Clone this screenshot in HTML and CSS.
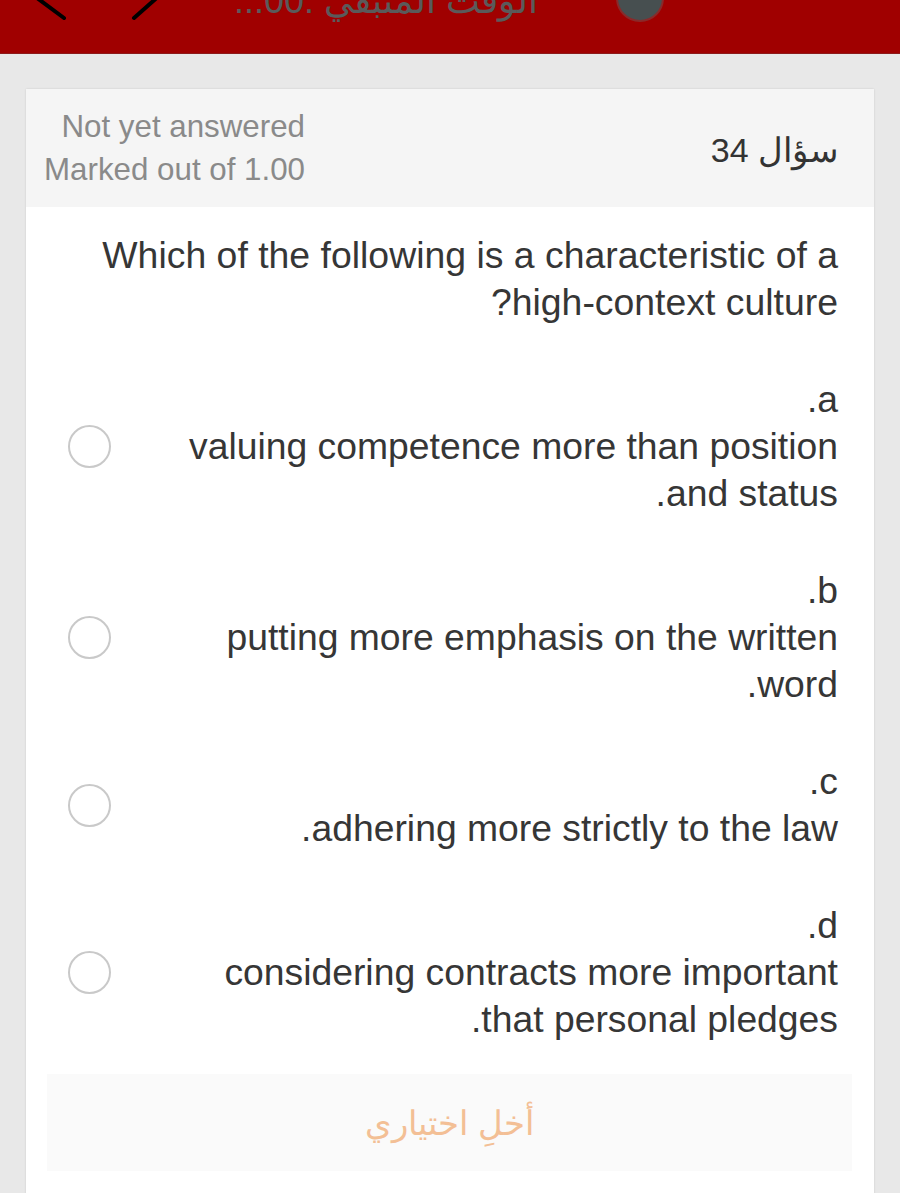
FILE: index.html
```html
<!DOCTYPE html>
<html lang="ar">
<head>
<meta charset="utf-8">
<title>Quiz</title>
<link rel="stylesheet" href="styles.css">
</head>
<body>
<header class="topbar">
  <div class="topbar-row">
    <svg class="chev chev-prev" width="38" height="54" viewBox="0 0 38 54"><polyline points="34,4 3,27 34,50" fill="none" stroke="#000" stroke-width="4" stroke-linecap="round" stroke-linejoin="round"/></svg>
    <svg class="chev chev-next" width="34" height="54" viewBox="0 0 34 54"><polyline points="4,4 30,27 4,50" fill="none" stroke="#000" stroke-width="4" stroke-linecap="round" stroke-linejoin="round"/></svg>
    <div class="timer" dir="rtl">الوقت المتبقي :00...</div>
    <div class="avatar"></div>
  </div>
</header>
<main class="page">
  <section class="card">
    <div class="card-head">
      <div class="state">
        <div>Not yet answered</div>
        <div>Marked out of 1.00</div>
      </div>
      <div class="qno" dir="rtl">سؤال 34</div>
    </div>
    <div class="card-body">
      <p class="question" dir="rtl">Which of the following is a characteristic of a<br>high-context culture?</p>
      <div class="options">
        <label class="option">
          <span class="radio"></span>
          <span class="opt-text" dir="rtl">a.<br>valuing competence more than position<br>and status.</span>
        </label>
        <label class="option">
          <span class="radio"></span>
          <span class="opt-text" dir="rtl">b.<br>putting more emphasis on the written<br>word.</span>
        </label>
        <label class="option">
          <span class="radio"></span>
          <span class="opt-text" dir="rtl">c.<br>adhering more strictly to the law.</span>
        </label>
        <label class="option">
          <span class="radio"></span>
          <span class="opt-text" dir="rtl">d.<br>considering contracts more important<br>that personal pledges.</span>
        </label>
      </div>
      <div class="clear-btn" dir="rtl">أخلِ اختياري</div>
    </div>
  </section>
</main>
</body>
</html>
```

FILE: styles.css
```css
html, body {
  margin: 0;
  padding: 0;
}
body {
  background: #e8e8e8;
  font-family: "Liberation Sans", Arial, "Noto Sans", sans-serif;
  color: #333;
  width: 900px;
  height: 1193px;
  overflow: hidden;
}
.topbar {
  height: 53px;
  background: #a00000;
  border-bottom: 1px solid #8c1a1a;
  overflow: hidden;
}
.topbar-row {
  display: flex;
  align-items: center;
  height: 54px;
  margin-top: -32px;
}
.chev {
  flex: none;
}
.chev-prev {
  margin-left: 30px;
}
.chev-next {
  margin-left: 62px;
}
.timer {
  margin-left: 70px;
  font-size: 36px;
  color: #5a5a5a;
  line-height: 1;
  margin-top: 12px;
  white-space: nowrap;
}
.avatar {
  width: 44px;
  height: 44px;
  border-radius: 50%;
  background: #474f50;
  border: 2px solid #8a2a2a;
  margin-left: 78px;
  margin-top: 6px;
}
.page {
  padding: 35px 26px 0;
}
.card {
  background: #fff;
  box-shadow: 0 0 2px rgba(0,0,0,0.12);
  min-height: 1110px;
}
.card-head {
  background: #f5f5f5;
  height: 118px;
  display: flex;
  align-items: center;
  justify-content: space-between;
  padding: 0 36px 0 14px;
  box-sizing: border-box;
}
.state {
  text-align: right;
  color: #8a8a8a;
  font-size: 31.3px;
  line-height: 43px;
  width: 265px;
}
.qno {
  font-size: 34px;
  color: #333;
  margin-top: 4px;
}
.card-body {
  padding: 25px 22px 0 21px;
}
.question {
  margin: 0;
  padding-right: 14px;
  font-size: 37.4px;
  line-height: 47px;
  text-align: right;
  color: #363636;
}
.options {
  display: flex;
  flex-direction: column;
  gap: 50px;
  margin-top: 50px;
}
.option {
  display: flex;
  align-items: center;
  padding-right: 14px;
}
.radio {
  flex: none;
  width: 39px;
  height: 39px;
  border: 2px solid #c9c9c9;
  border-radius: 50%;
  margin-left: 21px;
}
.opt-text {
  flex: 1;
  text-align: right;
  font-size: 37.3px;
  line-height: 47px;
  color: #363636;
}
.clear-btn {
  margin-top: 31px;
  height: 97px;
  background: #fafafa;
  color: #f3bf95;
  font-size: 34px;
  display: flex;
  align-items: center;
  justify-content: center;
}
```
